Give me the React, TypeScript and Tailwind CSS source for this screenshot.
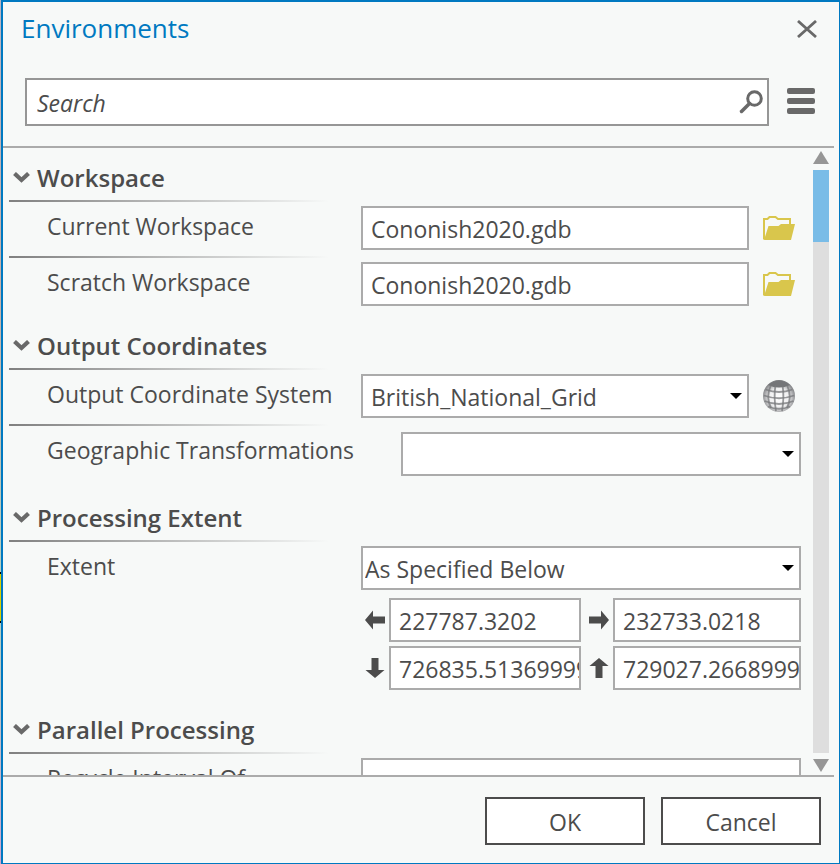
import { useId, useState, type ReactNode } from "react";

const FIELD =
  "block h-11 w-full min-w-0 rounded-none border-2 border-[#ababab] bg-white pt-0.5 text-[23px] leading-8 text-[#4c4c4c] outline-none";

function Chevron({ open }: { open: boolean }) {
  return (
    <svg width="17" height="12" viewBox="0 0 17 12" className={open ? "" : "-rotate-90"} aria-hidden="true">
      <path d="M1.500 1.500L8.500 8L15.500 1.500" fill="none" stroke="#696969" strokeWidth="4.200" />
    </svg>
  );
}

function FolderIcon() {
  return (
    <svg width="32" height="26" viewBox="0 0 32 26" aria-hidden="true">
      <path d="M1 24.500V4H4.500L6.500 2H12.500L15 4H27V9" fill="none" stroke="#d9c64c" strokeWidth="2" />
      <path d="M1 25L5.500 11H15.500L18 9H32L28 25Z" fill="#d9c64c" />
    </svg>
  );
}

function GlobeIcon() {
  return (
    <svg width="32" height="32" viewBox="0 0 32 32" aria-hidden="true">
      <defs>
        <radialGradient id="globe-fill" cx="50%" cy="56%" r="54%">
          <stop offset="0" stopColor="#ffffff" />
          <stop offset="0.55" stopColor="#f0f0f1" />
          <stop offset="1" stopColor="#808184" />
        </radialGradient>
      </defs>
      <circle cx="16" cy="16" r="16" fill="url(#globe-fill)" />
      <path d="M5 5Q16 -4 27 5Q16 10 5 5Z" fill="#747578" />
      <g fill="none" stroke="#77787b" strokeOpacity="0.75" strokeWidth="1.800">
        <path d="M2.500 9.500Q16 14.500 29.500 9.500M1 15.500Q16 21 31 15.500M1.500 21Q16 27 30.500 21M5 26.500Q16 31 27 26.500" />
        <path d="M12.500 5Q10.500 17 13 31M19.500 5Q21.500 17 19 31M8 5Q2.500 17 8 28M24 5Q29.500 17 24 28" />
      </g>
    </svg>
  );
}

function ExtentArrow({ turn }: { turn: string }) {
  return (
    <svg width="20" height="20" viewBox="0 0 20 20" className={turn} aria-hidden="true">
      <path d="M0 10L8 0.500V6.500H20V13.500H8V19.500Z" fill="#4c4c4c" />
    </svg>
  );
}

function Section({ title, children }: { title: string; children: ReactNode }) {
  const [open, setOpen] = useState(true);
  return (
    <section className="mb-6">
      <h2>
        <button
          type="button"
          aria-expanded={open}
          onClick={() => setOpen(!open)}
          className="flex h-[38px] w-full items-center gap-[7px] pl-1 text-left text-[24px] leading-8 font-semibold"
        >
          <span className="pb-1.5">
            <Chevron open={open} />
          </span>
          <span className="pb-1.5">{title}</span>
        </button>
      </h2>
      <Rule />
      {open && children}
    </section>
  );
}

function Rule() {
  return <div className="h-0.5 max-w-80 bg-linear-to-r from-[#808080] to-transparent" />;
}

function Row({ label, htmlFor, children }: { label: string; htmlFor: string; children: ReactNode }) {
  return (
    <div className="flex items-start pt-1">
      <label htmlFor={htmlFor} className="w-[352px] shrink-0 pt-1 pl-[38px] text-[23px] leading-8 whitespace-nowrap">
        {label}
      </label>
      <div className="min-w-0 flex-1">{children}</div>
    </div>
  );
}

function Select({ id, options, indent }: { id: string; options: string[]; indent: string }) {
  return (
    <div className="relative min-w-0 flex-1">
      <select id={id} className={`${FIELD} ${indent} appearance-none pr-8`}>
        {options.map((o) => (
          <option key={o}>{o}</option>
        ))}
      </select>
      <svg width="12" height="6" viewBox="0 0 12 6" className="pointer-events-none absolute top-[19px] right-[7px]" aria-hidden="true">
        <path d="M0 0H12L6 6Z" fill="#000" />
      </svg>
    </div>
  );
}

function WorkspaceRow({ label }: { label: string }) {
  const id = useId();
  return (
    <Row label={label} htmlFor={id}>
      <div className="flex items-center gap-3.5 pr-1.5">
        <input id={id} defaultValue="Cononish2020.gdb" className={`${FIELD} flex-1 pl-2`} />
        <button type="button" aria-label={`Browse ${label}`} className="shrink-0">
          <FolderIcon />
        </button>
      </div>
    </Row>
  );
}

function ExtentInput({ label, value, turn }: { label: string; value: string; turn: string }) {
  const id = useId();
  return (
    <>
      <label htmlFor={id} aria-label={label} className="flex justify-end pr-1">
        <ExtentArrow turn={turn} />
      </label>
      <input id={id} defaultValue={value} className={`${FIELD} pl-2`} />
    </>
  );
}

export default function App() {
  return (
    <div className="flex h-screen font-['Open_Sans','Noto_Sans',sans-serif] text-[#4c4c4c]">
      <div className="flex w-px shrink-0 flex-col">
        <div className="flex-[575] bg-linear-to-b from-[#b9b4c4] via-[#c9b0a8] to-[#b5cfc0]" />
        <div className="flex-[47] border-y-2 border-black bg-[#d9d000]" />
        <div className="flex-[242] bg-linear-to-b from-[#b5cfc0] to-[#cfa6cf]" />
      </div>
      <main className="flex min-w-0 flex-1 flex-col border-t-2 border-r border-b border-l-2 border-[#0079c1] bg-[#f7f9f8]">
        <header className="flex h-[52px] shrink-0 items-center justify-between pr-[21px] pl-[18px]">
          <h1 className="text-[26px] leading-9 text-[#0079c1]">Environments</h1>
          <button type="button" aria-label="Close" className="pt-0.5">
            <svg width="22" height="18" viewBox="0 0 22 18" aria-hidden="true">
              <path d="M2 1L20 17M20 1L2 17" stroke="#696969" strokeWidth="2.800" />
            </svg>
          </button>
        </header>
        <div className="flex shrink-0 items-center gap-[18px] pt-6 pr-6 pb-5 pl-[22px]">
          <div className="flex h-12 min-w-0 flex-1 items-center border-2 border-[#969696] bg-white pr-1 pl-2.5">
            <input
              type="search"
              aria-label="Search"
              placeholder="Search"
              className="min-w-0 flex-1 bg-transparent pt-0.5 text-[23px] leading-8 italic outline-none placeholder:text-[#4c4c4c]"
            />
            <button type="button" aria-label="Run search">
              <svg width="24" height="24" viewBox="0 0 24 24" aria-hidden="true">
                <circle cx="15.500" cy="8.500" r="6.800" fill="none" stroke="#696969" strokeWidth="3" />
                <path d="M10.500 13.500L2.500 21.500" stroke="#696969" strokeWidth="3.500" strokeLinecap="round" />
              </svg>
            </button>
          </div>
          <button type="button" aria-label="Menu" className="flex w-7 flex-col gap-1 pb-0.5">
            <span className="h-1.5 rounded-xs bg-[#696969]" />
            <span className="h-1.5 rounded-xs bg-[#696969]" />
            <span className="h-1.5 rounded-xs bg-[#696969]" />
          </button>
        </div>

        <div className="mr-[5px] flex min-h-0 flex-1 border-y-2 border-[#ababab]">
          <div className="min-w-0 flex-1 overflow-y-auto pt-3.5 pr-3 pl-1.5 [scrollbar-width:none]">
            <Section title="Workspace">
              <WorkspaceRow label="Current Workspace" />
              <div className="pt-1.5">
                <Rule />
              </div>
              <WorkspaceRow label="Scratch Workspace" />
            </Section>

            <Section title="Output Coordinates">
              <Row label="Output Coordinate System" htmlFor="coordinate-system">
                <div className="flex items-center gap-3.5 pr-1.5">
                  <Select id="coordinate-system" options={["British_National_Grid"]} indent="pl-2" />
                  <button type="button" aria-label="Select coordinate system" className="shrink-0">
                    <GlobeIcon />
                  </button>
                </div>
              </Row>
              <div className="pt-1.5">
                <Rule />
              </div>
              <Row label="Geographic Transformations" htmlFor="transformations">
                <div className="flex pt-0.5 pb-0.5 pl-10">
                  <Select id="transformations" options={[""]} indent="pl-2" />
                </div>
              </Row>
            </Section>

            <Section title="Processing Extent">
              <Row label="Extent" htmlFor="extent">
                <Select id="extent" options={["As Specified Below"]} indent="pl-0.5" />
                <div className="mt-2 grid grid-cols-[28px_minmax(0,192fr)_32px_minmax(0,188fr)] items-center gap-y-1">
                  <ExtentInput label="Left" value="227787.3202" turn="rotate-0" />
                  <ExtentInput label="Right" value="232733.0218" turn="rotate-180" />
                  <ExtentInput label="Bottom" value="726835.513699999" turn="-rotate-90" />
                  <ExtentInput label="Top" value="729027.266899999" turn="rotate-90" />
                </div>
              </Row>
            </Section>

            <Section title="Parallel Processing">
              <Row label="Recycle Interval Of" htmlFor="recycle">
                <input id="recycle" className={`${FIELD} pl-2`} />
              </Row>
            </Section>
          </div>

          <div className="mr-[5px] flex w-4 shrink-0 flex-col pt-[3px] pb-[3px]" aria-hidden="true">
            <svg width="16" height="13" viewBox="0 0 16 13">
              <path d="M8 0L16 13H0Z" fill="#969696" />
            </svg>
            <div className="my-1.5 flex-1 bg-[#dedede]">
              <div className="h-[72px] bg-[#79bce7]" />
            </div>
            <svg width="16" height="13" viewBox="0 0 16 13">
              <path d="M0 0H16L8 13Z" fill="#969696" />
            </svg>
          </div>
        </div>

        <footer className="flex shrink-0 justify-end gap-4 pt-5 pr-[18px] pb-[18px]">
          <button type="button" className="h-12 w-40 border-2 border-[#4c4c4c] bg-white pt-0.5 text-[23px] leading-8">
            OK
          </button>
          <button type="button" className="h-12 w-40 border-2 border-[#4c4c4c] bg-white pt-0.5 text-[23px] leading-8">
            Cancel
          </button>
        </footer>
      </main>
    </div>
  );
}
